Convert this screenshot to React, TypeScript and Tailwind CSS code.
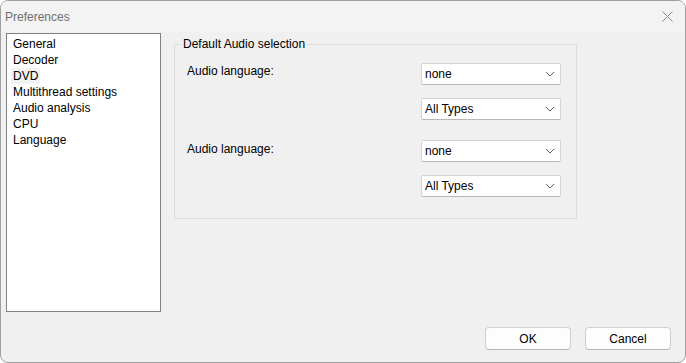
import React from 'react';

const items = ['General', 'Decoder', 'DVD', 'Multithread settings', 'Audio analysis', 'CPU', 'Language'];

function Combo({ value }: { value: string }) {
  return (
    <div className="w-[140px] h-[22px] bg-white border border-[#d4d4d4] border-b-[#b8b8b8] rounded-[2px] flex items-center justify-between pl-[3px] pr-[5px]">
      <span>{value}</span>
      <svg width="10" height="6" viewBox="0 0 10 6" fill="none">
        <path d="M1 1l4 4 4-4" stroke="#5f5f5f" strokeWidth="1" />
      </svg>
    </div>
  );
}

function Btn({ label }: { label: string }) {
  return (
    <button className="w-[86px] h-[23px] bg-[#fdfdfd] border border-[#d0d0d0] border-b-[#b5b5b5] rounded-[4px] text-[12px] text-black">
      {label}
    </button>
  );
}

export default function App() {
  return (
    <div
      className="w-[686px] h-[363px] bg-[#f0f0f0] border border-[#a0a0a0] rounded-[8px] overflow-hidden flex flex-col text-[12px] text-black leading-[16px]"
      style={{ fontFamily: '"Liberation Sans", Arial, sans-serif' }}
    >
      {/* title bar */}
      <div className="h-[31px] shrink-0 bg-[#f3f3f3] flex items-center justify-between pl-[4px] pr-[12px]">
        <span className="text-[#6f6f6f] text-[12px]">Preferences</span>
        <svg width="11" height="11" viewBox="0 0 11 11" fill="none">
          <path d="M0.5 0.5l10 10M10.5 0.5l-10 10" stroke="#8a8a8a" strokeWidth="1" />
        </svg>
      </div>

      <div className="flex pl-[5px] pt-[1px]">
        {/* category list */}
        <div className="w-[155px] h-[279px] bg-white border border-[#828282] pt-[2px] pl-[6px]">
          {items.map((it) => (
            <div key={it} className="h-[16px]">
              {it === 'DVD' ? (
                <span className="bg-[#f2f2f2] -ml-[2px] px-[2px] inline-block">{it}</span>
              ) : (
                it
              )}
            </div>
          ))}
        </div>

        {/* group box */}
        <fieldset className="ml-[13px] mt-[3px] w-[403px] h-[183px] border border-[#dcdcdc] px-[12px]">
          <legend className="ml-[-6px] px-[2px] leading-[16px]">Default Audio selection</legend>
          <div className="flex justify-between pt-[8px] pr-[3px]">
            <span className="mt-[3px]">Audio language:</span>
            <div className="flex flex-col gap-[13px] mt-[3px]">
              <Combo value="none" />
              <Combo value="All Types" />
            </div>
          </div>
          <div className="flex justify-between pt-[20px] pr-[3px]">
            <span className="mt-[1px]">Audio language:</span>
            <div className="flex flex-col gap-[13px]">
              <Combo value="none" />
              <Combo value="All Types" />
            </div>
          </div>
        </fieldset>
      </div>

      <div className="flex justify-end gap-[14px] pr-[14px] mt-[15px]">
        <Btn label="OK" />
        <Btn label="Cancel" />
      </div>
    </div>
  );
}
